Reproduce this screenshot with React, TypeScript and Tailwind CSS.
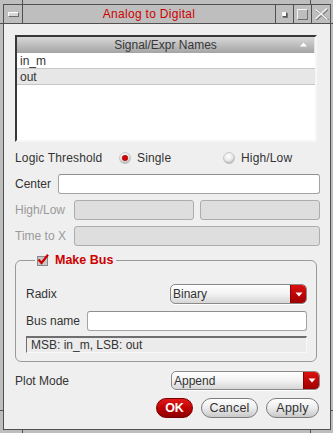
import React from "react";

const FONT = { fontFamily: '"Liberation Sans", Arial, Helvetica, sans-serif' };

function Radio({ checked, id }: { checked: boolean; id: string }) {
  return (
    <svg width="12" height="12" viewBox="0 0 12 12" className="shrink-0">
      <defs>
        <radialGradient id={id} cx="45%" cy="35%" r="70%">
          <stop offset="0" stopColor="#ffffff" />
          <stop offset="0.55" stopColor="#e9e9e9" />
          <stop offset="1" stopColor="#a9a9a9" />
        </radialGradient>
      </defs>
      <circle cx="6" cy="6" r="5.5" fill={`url(#${id})`} stroke="#b4b4b4" strokeWidth="0.6" />
      {checked && <circle cx="6" cy="6" r="2.8" fill="#d20000" stroke="#8a0000" strokeWidth="0.5" />}
    </svg>
  );
}

function Arrow() {
  return (
    <svg width="8" height="5" viewBox="0 0 8 5">
      <path d="M0.5 0.5h7L4 4.5z" fill="#ffffff" />
    </svg>
  );
}

function Dropdown({ value, wide }: { value: string; wide: boolean }) {
  return (
    <div
      className={`flex h-full ${wide ? "w-[149px]" : "w-[137px]"} rounded-[5px] border border-[#8a8a8a] bg-gradient-to-b from-[#ffffff] via-[#f2f2f2] to-[#d6d6d6] shadow-[0_1px_0_#ffffff] overflow-hidden`}
    >
      <span className="flex-1 pl-[2px] flex items-center text-[12px] text-[#333]">{value}</span>
      <span className="w-[16px] flex items-center justify-center rounded-r-[4px] bg-gradient-to-b from-[#dc1010] to-[#a00000] border-l border-[#900000]">
        <Arrow />
      </span>
    </div>
  );
}

function TextInput({ disabled, className }: { disabled?: boolean; className: string }) {
  return (
    <div
      className={`h-full rounded-[3px] border ${
        disabled ? "bg-[#dedede] border-[#adadad]" : "bg-white border-[#a4a4a4] border-t-[#8e8e8e]"
      } ${className}`}
    />
  );
}

function PillButton({ label, w, primary }: { label: string; w: string; primary?: boolean }) {
  if (primary) {
    return (
      <div
        className={`${w} h-full rounded-full border border-[#7a0000] bg-gradient-to-b from-[#e01a1a] via-[#c00000] to-[#8e0000] flex items-center justify-center text-[12.5px] font-bold text-white`}
      >
        {label}
      </div>
    );
  }
  return (
    <div
      className={`${w} h-full rounded-full border border-[#7c7c7c] bg-gradient-to-b from-[#ffffff] via-[#ececec] to-[#c8c8c8] flex items-center justify-center text-[12.5px] text-[#333] tracking-[0.2px]`}
    >
      {label}
    </div>
  );
}

function CheckBox() {
  return (
    <svg width="12" height="12" viewBox="0 0 12 12" className="shrink-0">
      <rect x="0.5" y="2.5" width="10" height="9" fill="#c8c8c8" stroke="#8a8a8a" />
      <path d="M1.5 5.5 L4.5 9 L11 0.8" fill="none" stroke="#cc0000" strokeWidth="2.2" />
    </svg>
  );
}

export default function App() {
  return (
    <div className="relative w-[333px] h-[433px] bg-[#bebebe] flex flex-col overflow-hidden select-none" style={FONT}>
      {/* resize corner ticks */}
      <div className="absolute left-[22px] top-0 w-[1px] h-[4px] bg-[#505050]" />
      <div className="absolute left-[310px] top-0 w-[1px] h-[4px] bg-[#505050]" />
      <div className="absolute left-0 top-[410px] w-[3px] h-[1px] bg-[#505050]" />
      <div className="absolute left-[331px] top-[410px] w-[2px] h-[1px] bg-[#505050]" />
      <div className="absolute left-[22px] top-[430px] w-[1px] h-[3px] bg-[#505050]" />
      <div className="absolute left-[310px] top-[430px] w-[1px] h-[3px] bg-[#505050]" />

      {/* top band */}
      <div className="h-[4px] shrink-0" />

      {/* title bar */}
      <div className="flex h-[20px] shrink-0 border-b border-[#505050]">
        <div className="w-[3px]" />
        <div className="flex flex-1 border-t border-l border-r border-[#505050]">
          <div className="w-[18px] flex items-center justify-center">
            <div className="w-[11px] h-[5px] bg-[#d6d6d6] border-t border-l border-t-white border-l-white border-b border-r border-b-[#6a6a6a] border-r-[#6a6a6a]" />
          </div>
          <div className="flex-1 border-l border-[#505050] flex items-center justify-center text-[12px] text-[#cc0000] tracking-[0.3px]">
            Analog to Digital
          </div>
          <div className="w-[18px] border-l border-[#505050] flex items-center justify-center">
            <div className="w-[5px] h-[5px] bg-white border-b border-r border-[#555] border-t border-l border-t-[#f0f0f0] border-l-[#f0f0f0] shadow-[1px_1px_0_#777]" />
          </div>
          <div className="w-[18px] border-l border-[#505050] flex items-center justify-center">
            <div className="w-[11px] h-[11px] border border-t-[#f4f4f4] border-l-[#f4f4f4] border-b-[#6e6e6e] border-r-[#6e6e6e]" />
          </div>
          <div className="w-[19px] border-l border-[#505050] flex items-center justify-center">
            <svg width="15" height="12" viewBox="0 0 15 12">
              <path d="M2 1.5 L13.5 11.5 M13 0.5 L1.5 11" stroke="#7a7a7a" strokeWidth="2.2" fill="none" transform="translate(0.7 0.7)" />
              <path d="M2 1.5 L13.5 11.5 M13 0.5 L1.5 11" stroke="#f2f2f2" strokeWidth="1.6" fill="none" />
            </svg>
          </div>
        </div>
        <div className="w-[2px]" />
      </div>

      {/* body */}
      <div className="flex flex-1 min-h-0">
        <div className="w-[3px]" />
        <div className="flex-1 flex flex-col bg-[#efefef] border-l border-r border-b border-[#505050] pt-[11px] pl-[11px] pr-[10px]">
          {/* list */}
          <div className="h-[107px] w-[302px] shrink-0 flex flex-col bg-white border-2 border-t-[#383838] border-l-[#383838] border-r-[#f6f6f6] border-b-[#f6f6f6]">
            <div className="h-[16px] shrink-0 relative flex items-center justify-center bg-gradient-to-b from-[#d8d8d8] to-[#a4a4a4] border-r border-[#e4e4e4] text-[12px] text-[#383838]">
              Signal/Expr Names
              <span className="absolute right-[7px] top-[5px]">
                <svg width="7" height="5" viewBox="0 0 7 5">
                  <path d="M0 4.5h7L3.5 0.5z" fill="#ffffff" />
                </svg>
              </span>
            </div>
            <div className="h-[16px] shrink-0 flex items-center pl-[3px] bg-white border-b border-[#c6c6c6] text-[12px] text-[#333]">
              in_m
            </div>
            <div className="h-[16px] shrink-0 flex items-center pl-[3px] bg-[#e7e7e7] border-b border-[#c6c6c6] text-[12px] text-[#333]">
              out
            </div>
          </div>

          {/* logic threshold */}
          <div className="mt-[6px] h-[20px] shrink-0 flex items-center text-[12px] text-[#333] tracking-[0.15px]">
            <span className="w-[104px]">Logic Threshold</span>
            <span className="w-[104px] flex items-center gap-[6px]">
              <Radio checked id="r1" />
              Single
            </span>
            <span className="flex items-center gap-[6px]">
              <Radio checked={false} id="r2" />
              High/Low
            </span>
          </div>

          {/* center */}
          <div className="mt-[6px] h-[20px] shrink-0 flex items-center text-[12px] text-[#333]">
            <span className="w-[43px]">Center</span>
            <TextInput className="flex-1" />
          </div>

          {/* high/low */}
          <div className="mt-[6px] h-[20px] shrink-0 flex items-center gap-[6px] text-[12px] text-[#9a9a9a]">
            <span className="w-[53px]">High/Low</span>
            <TextInput disabled className="flex-1" />
            <TextInput disabled className="flex-1" />
          </div>

          {/* time to x */}
          <div className="mt-[6px] h-[20px] shrink-0 flex items-center text-[12px] text-[#9a9a9a]">
            <span className="w-[59px]">Time to X</span>
            <TextInput disabled className="flex-1" />
          </div>

          {/* make bus */}
          <fieldset className="mt-[7px] w-[302px] shrink-0 rounded-[6px] border border-[#9a9a9a] pt-[17px] pb-[8px] pl-[10px] pr-[9px]">
            <legend className="ml-[9px] px-[2px] pr-[3px] h-[14px] flex items-center gap-[6px] text-[12.5px] font-bold text-[#cc0000]">
              <CheckBox />
              Make Bus
            </legend>
            <div className="h-[20px] flex items-center justify-between text-[12px] text-[#333]">
              <span>Radix</span>
              <Dropdown value="Binary" wide={false} />
            </div>
            <div className="mt-[7px] h-[20px] flex items-center text-[12px] text-[#333]">
              <span className="w-[61px]">Bus name</span>
              <TextInput className="flex-1" />
            </div>
            <div className="mt-[5px] h-[17px] flex items-center pl-[4px] bg-[#ebebeb] border-t-2 border-l border-t-[#6e6e6e] border-l-[#6e6e6e] border-b border-r border-b-[#f8f8f8] border-r-[#f8f8f8] text-[12px] text-[#333]">
              MSB: in_m, LSB: out
            </div>
          </fieldset>

          {/* plot mode */}
          <div className="mt-[9px] h-[19px] shrink-0 flex items-center justify-between text-[12px] text-[#333]">
            <span>Plot Mode</span>
            <Dropdown value="Append" wide />
          </div>

          {/* buttons */}
          <div className="mt-[8px] h-[20px] shrink-0 flex justify-end gap-[8px] pr-[1px]">
            <PillButton label="OK" w="w-[37px]" primary />
            <PillButton label="Cancel" w="w-[57px]" />
            <PillButton label="Apply" w="w-[53px]" />
          </div>
        </div>
        <div className="w-[2px]" />
      </div>

      {/* bottom band */}
      <div className="h-[3px] shrink-0" />
    </div>
  );
}
